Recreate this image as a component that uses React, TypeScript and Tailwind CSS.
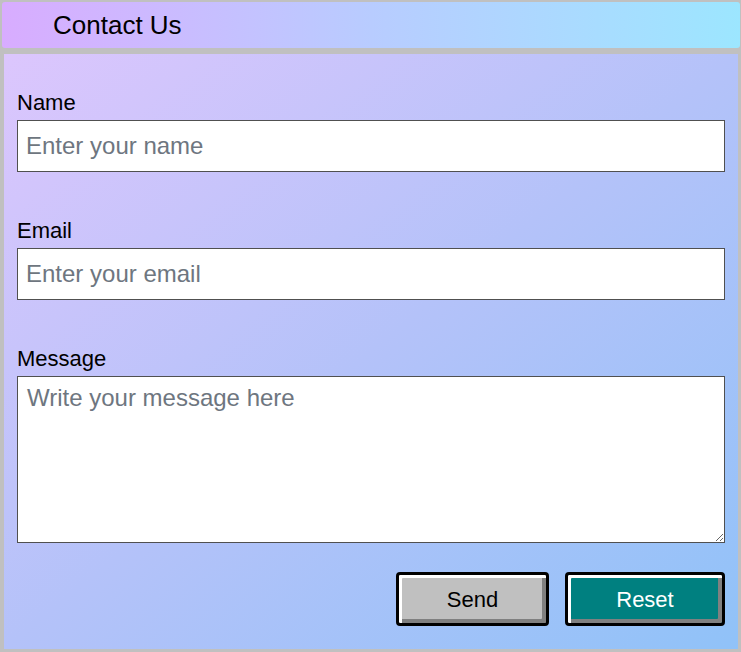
import React from "react";

const ContactForm = () => {
  return (
    <div className="w-[741px] h-[652px] bg-[#c0c0c0] pt-[2px] pl-[2px] pr-[1px] pb-[3px] flex flex-col font-['Liberation_Sans',Arial,sans-serif]">
      {/* --- Title bar --- */}
      <div className="h-[46px] shrink-0 rounded-[3px] bg-gradient-to-r from-[#d8acff] via-[#b8ccff] to-[#9ce6ff] flex items-center pl-[51px]">
        <h1 className="text-[26px] leading-none text-black">Contact Us</h1>
      </div>

      {/* --- Form body --- */}
      <form
        className="mt-[6px] ml-[2px] mr-[2px] flex-1 bg-gradient-to-br from-[#dcc6fd] via-[#b4c2f9] to-[#90c2f8] px-[13px] pt-[35px]"
        onSubmit={(e) => e.preventDefault()}
      >
        <div className="mb-[45px]">
          <label className="block text-[22px] leading-[28px] text-black mb-[3px]">
            Name
          </label>
          <input
            type="text"
            placeholder="Enter your name"
            className="w-full h-[52px] bg-white border border-[#505050] px-[8px] text-[24px] text-black placeholder:text-[#6e7680] outline-none"
          />
        </div>

        <div className="mb-[45px]">
          <label className="block text-[22px] leading-[28px] text-black mb-[3px]">
            Email
          </label>
          <input
            type="email"
            placeholder="Enter your email"
            className="w-full h-[52px] bg-white border border-[#505050] px-[8px] text-[24px] text-black placeholder:text-[#6e7680] outline-none"
          />
        </div>

        <div>
          <label className="block text-[22px] leading-[28px] text-black mb-[3px]">
            Message
          </label>
          <textarea
            placeholder="Write your message here"
            className="block w-full h-[167px] bg-white border border-[#505050] px-[9px] py-[6px] text-[24px] leading-[29px] text-black placeholder:text-[#6e7680] outline-none"
          />
        </div>

        <div className="flex justify-end gap-[16px] mt-[29px]">
          <button
            type="submit"
            className="w-[153px] h-[54px] rounded-[4px] border-[3px] border-black bg-[#c0c0c0] shadow-[inset_3px_3px_0_#ffffff,inset_-4px_-4px_0_#808080] text-[22px] text-black"
          >
            Send
          </button>
          <button
            type="reset"
            className="w-[160px] h-[54px] rounded-[4px] border-[3px] border-black bg-[#008080] shadow-[inset_3px_3px_0_#ffffff,inset_-4px_-4px_0_#808080] text-[22px] text-white"
          >
            Reset
          </button>
        </div>
      </form>
    </div>
  );
};

export default function App() {
  return <ContactForm />;
}
